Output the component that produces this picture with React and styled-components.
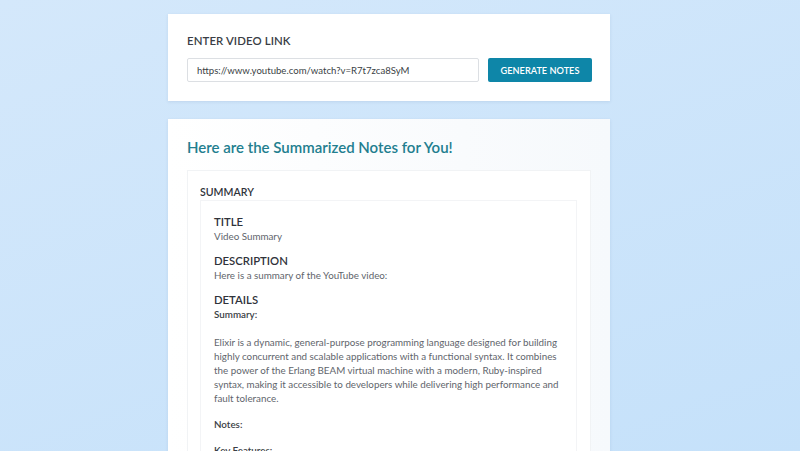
import styled, { createGlobalStyle } from 'styled-components';

const GlobalStyle = createGlobalStyle`
  html, body {
    margin: 0;
    padding: 0;
    overflow: hidden;
  }
  body {
    min-height: 451px;
    background: linear-gradient(160deg, #d4e8fb 0%, #c5e1fa 100%);
    font-family: Lato, "Noto Sans", sans-serif;
    color: #2f333a;
  }
  * {
    box-sizing: border-box;
  }
`;

const Shell = styled.div`
  padding-right: 22px;
`;

const Page = styled.main`
  width: 442px;
  margin: 0 auto;
  padding-top: 14px;
  display: flex;
  flex-direction: column;
  gap: 18px;
`;

const Card = styled.section`
  background: ${(p) => (p.$fade ? 'linear-gradient(90deg, #ffffff 0%, #f6f9fc 100%)' : '#ffffff')};
  box-shadow: 0 1px 3px rgba(60, 90, 130, 0.12);
  padding: ${(p) => (p.$fade ? '19px 19px 0' : '20px 18px 19px 19px')};
`;

const Label = styled.h3`
  margin: 0 0 10px;
  font-size: 11.4px;
  font-weight: 600;
  letter-spacing: 0.1px;
  color: #3a3e45;
  line-height: 14px;
`;

const Row = styled.div`
  display: flex;
  gap: 9px;
  align-items: center;
`;

const Input = styled.input`
  flex: 1;
  height: 24px;
  border: 1px solid #dcdfe3;
  border-radius: 2px;
  padding: 0 9px;
  font-family: Lato, sans-serif;
  font-size: 9.6px;
  color: #3b3f45;
  outline: none;
`;

const Button = styled.button`
  width: 104px;
  height: 24px;
  border: none;
  border-radius: 2px;
  background: #0e86a8;
  color: #ffffff;
  font-family: Lato, sans-serif;
  font-size: 9.2px;
  font-weight: 600;
  text-transform: uppercase;
  cursor: pointer;
`;

const Heading = styled.h2`
  margin: 0 0 14px;
  font-size: 15px;
  font-weight: 600;
  color: #227e8f;
  line-height: 18px;
`;

const Panel = styled.div`
  background: #ffffff;
  border: 1px solid #f1f3f5;
  border-bottom: none;
  padding: 14px 13px 0 12px;
`;

const PanelTitle = styled.h4`
  margin: 0 0 1px;
  font-size: 10.6px;
  font-weight: 600;
  color: #2f333a;
  line-height: 14px;
`;

const Inner = styled.div`
  border: 1px solid #f3f4f6;
  border-bottom: none;
  padding: 13px 12px 0 13px;
`;

const Block = styled.div`
  margin-bottom: 9px;
`;

const Field = styled.h5`
  margin: 0;
  font-size: 11.3px;
  font-weight: 600;
  color: #2f333a;
  line-height: 15px;
  text-transform: uppercase;
`;

const Text = styled.p`
  margin: 0 0 ${(p) => p.$gap || 0}px;
  font-size: 9.8px;
  line-height: ${(p) => p.$lh || 15}px;
  font-weight: ${(p) => (p.$bold ? 600 : 400)};
  color: ${(p) => (p.$bold ? '#3a3e45' : '#61656c')};
`;

const fields = [
  { name: 'Title', value: 'Video Summary' },
  { name: 'Description', value: 'Here is a summary of the YouTube video:' },
];

export default function App() {
  return (
    <>
      <GlobalStyle />
      <Shell>
        <Page>
          <Card>
            <Label>ENTER VIDEO LINK</Label>
            <Row>
              <Input defaultValue="https://www.youtube.com/watch?v=R7t7zca8SyM" />
              <Button>Generate Notes</Button>
            </Row>
          </Card>

          <Card $fade>
            <Heading>Here are the Summarized Notes for You!</Heading>
            <Panel>
              <PanelTitle>SUMMARY</PanelTitle>
              <Inner>
                {fields.map((f) => (
                  <Block key={f.name}>
                    <Field>{f.name}</Field>
                    <Text>{f.value}</Text>
                  </Block>
                ))}
                <Field>Details</Field>
                <Text $bold $lh={14} $gap={14}>Summary:</Text>
                <Text $lh={14} $gap={12}>
                  Elixir is a dynamic, general-purpose programming language designed for building
                  highly concurrent and scalable applications with a functional syntax. It combines
                  the power of the Erlang BEAM virtual machine with a modern, Ruby-inspired
                  syntax, making it accessible to developers while delivering high performance and
                  fault tolerance.
                </Text>
                <Text $bold $lh={14} $gap={12}>Notes:</Text>
                <Text $bold $lh={14}>Key Features:</Text>
              </Inner>
            </Panel>
          </Card>
        </Page>
      </Shell>
    </>
  );
}
